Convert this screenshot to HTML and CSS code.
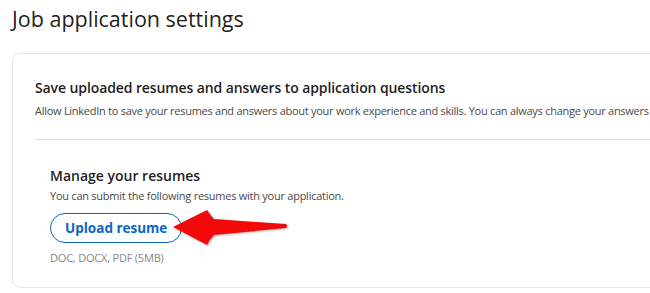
FILE: index.html
```
<!DOCTYPE html>
<html lang="en">

<head>
    <meta charset="UTF-8">
    <meta name="viewport" content="width=device-width, initial-scale=1.0">
    <title>Job application settings</title>
    <link rel="stylesheet" href="styles.css">
</head>

<body>
    <h1 class="page-title">Job application settings</h1>

    <div class="card">
        <div class="card-head">
            <h2 class="card-title">Save uploaded resumes and answers to application questions</h2>
            <p class="card-text">Allow LinkedIn to save your resumes and answers about your work experience and skills. You can always change your answers</p>
        </div>

        <div class="resumes">
            <h3 class="resumes-title">Manage your resumes</h3>
            <p class="resumes-text">You can submit the following resumes with your application.</p>
            <div class="upload-row">
                <button class="upload-btn">Upload resume</button>
                <svg class="arrow" width="120" height="40" viewBox="0 0 120 40">
                    <path d="M2 17 L36 0 Q39 5 43 9 L115 14 Q117 16 115 18 L43 25 Q39 29 36 35 Z" fill="#f20a0a" />
                </svg>
            </div>
            <p class="file-types">DOC, DOCX, PDF (5MB)</p>
        </div>
    </div>
</body>

</html>
```

FILE: styles.css
```
body {
    margin: 0;
    padding: 0 12px;
    font-family: "Open Sans", "Noto Sans", sans-serif;
    background: #fff;
    overflow: hidden;
}

.page-title {
    margin: 0;
    padding-top: 4px;
    height: 49px;
    font-size: 21.5px;
    font-weight: 400;
    color: rgba(0, 0, 0, 0.9);
}

.card {
    width: 700px;
    border: 1px solid #e6e6e6;
    border-radius: 8px;
    padding: 0 22px 22px 22px;
}

.card-head {
    padding-top: 24px;
    padding-bottom: 21px;
    border-bottom: 1px solid #e0e0e0;
}

.card-title {
    margin: 0;
    font-size: 14px;
    font-weight: 600;
    letter-spacing: -0.1px;
    color: rgba(0, 0, 0, 0.9);
}

.card-text {
    margin: 6px 0 0 0;
    font-size: 11px;
    letter-spacing: -0.27px;
    color: #4a4a4a;
    white-space: nowrap;
}

.resumes {
    padding: 26px 15px 0 15px;
}

.resumes-title {
    margin: 0;
    font-size: 14px;
    font-weight: 600;
    color: rgba(0, 0, 0, 0.9);
}

.resumes-text {
    margin: 3px 0 0 0;
    font-size: 11px;
    letter-spacing: -0.25px;
    color: #4a4a4a;
}

.upload-row {
    position: relative;
    margin-top: 10px;
}

.upload-btn {
    height: 30px;
    padding: 0 14px;
    border: 1px solid #0a66c2;
    border-radius: 16px;
    background: #fff;
    color: #0a66c2;
    font-family: inherit;
    font-size: 13.5px;
    font-weight: 700;
}

.arrow {
    position: absolute;
    left: 121px;
    top: -3px;
    filter: drop-shadow(1px 1px 1px rgba(0, 0, 0, 0.3));
}

.file-types {
    margin: 7px 0 0 0;
    font-size: 11px;
    letter-spacing: -0.2px;
    color: #888;
}
```
